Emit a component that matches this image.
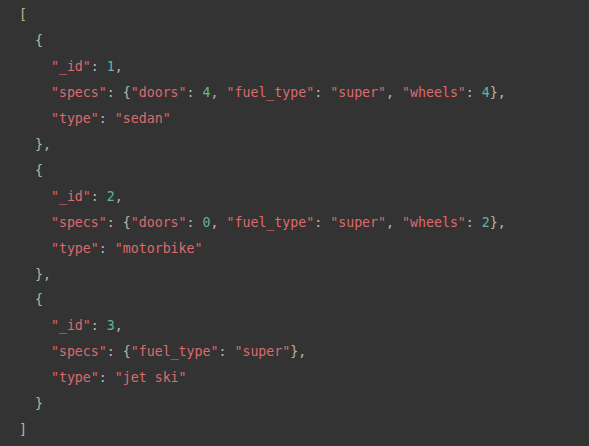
const STR = 'text-[#dd6a6f]';
const NUM = 'text-[#62b59e]';
const BR = 'text-[#b5b99a]';
const PUN = 'text-[#b8b8b8]';

type Tok = [string, string];

const s = (t: string): Tok => [STR, t];
const n = (t: string): Tok => [NUM, t];
const b = (t: string): Tok => [BR, t];
const p = (t: string): Tok => [PUN, t];

function record(id: string, specs: Tok[], type: string, last: boolean): Tok[][] {
  return [
    [p('  '), b('{')],
    [p('    '), s('"_id"'), p(': '), n(id), p(',')],
    [p('    '), s('"specs"'), p(': '), b('{'), ...specs, b('}'), p(',')],
    [p('    '), s('"type"'), p(': '), s(`"${type}"`)],
    [p('  '), b('}'), ...(last ? [] : [p(',')])],
  ];
}

const lines: Tok[][] = [
  [b('[')],
  ...record('1', [s('"doors"'), p(': '), n('4'), p(', '), s('"fuel_type"'), p(': '), s('"super"'), p(', '), s('"wheels"'), p(': '), n('4')], 'sedan', false),
  ...record('2', [s('"doors"'), p(': '), n('0'), p(', '), s('"fuel_type"'), p(': '), s('"super"'), p(', '), s('"wheels"'), p(': '), n('2')], 'motorbike', false),
  ...record('3', [s('"fuel_type"'), p(': '), s('"super"')], 'jet ski', true),
  [b(']')],
];

export default function App() {
  return (
    <div className="w-[589px] h-[446px] bg-[#333333] overflow-hidden">
      <pre className="pl-[19px] pt-[2px] font-['DejaVu_Sans_Mono',monospace] text-[13.25px] leading-[25.95px]">
        {lines.map((line, i) => (
          <div key={i} className="whitespace-pre">
            {line.map(([cls, txt], j) => (
              <span key={j} className={cls}>{txt}</span>
            ))}
          </div>
        ))}
      </pre>
    </div>
  );
}
